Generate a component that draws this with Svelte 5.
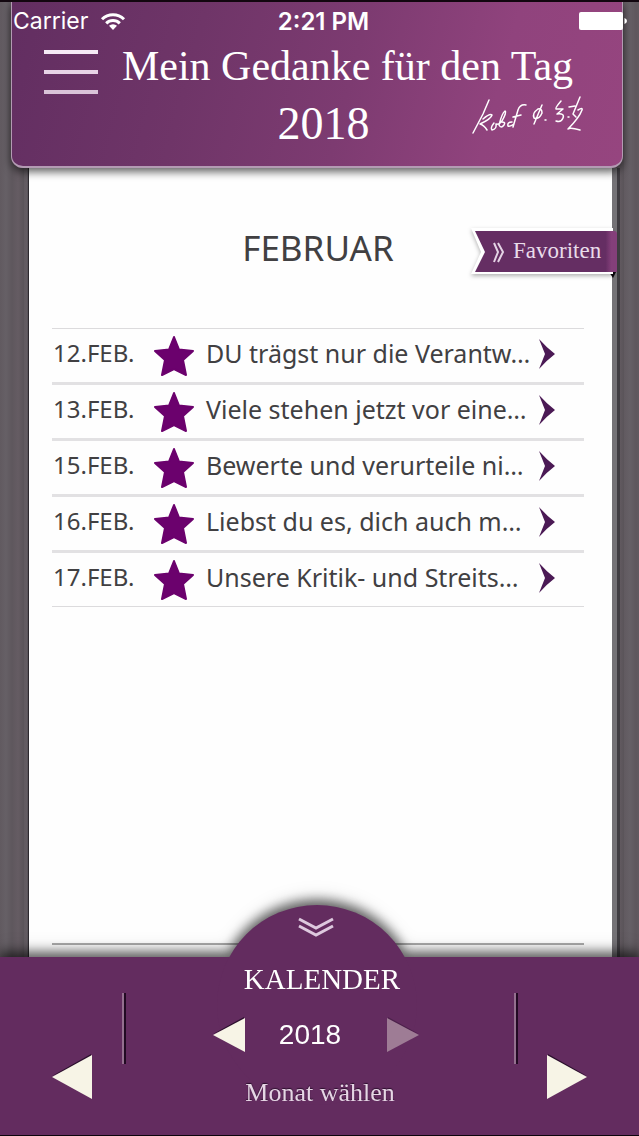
<script lang="ts">
  type Thought = { date: string; text: string };

  const thoughts: Thought[] = [
    { date: "12.FEB.", text: "DU trägst nur die Verantw…" },
    { date: "13.FEB.", text: "Viele stehen jetzt vor eine…" },
    { date: "15.FEB.", text: "Bewerte und verurteile ni…" },
    { date: "16.FEB.", text: "Liebst du es, dich auch m…" },
    { date: "17.FEB.", text: "Unsere Kritik- und Streits…" },
  ];

  const lastYear = 2018;
  let year = $state(2018);
</script>

<div class="screen">
  <header>
    <div class="status">
      <span class="carrier">
        Carrier
        <svg width="26" height="20" viewBox="0 0 26 20" aria-hidden="true">
          <g fill="none" stroke="#fff" stroke-width="3">
            <path d="M2 8.2a15.6 15.6 0 0 1 22 0" />
            <path d="M6.2 12.4a9.6 9.6 0 0 1 13.6 0" />
          </g>
          <path d="M13 19l-4-4.2a5.8 5.8 0 0 1 8 0z" fill="#fff" />
        </svg>
      </span>
      <span class="clock">2:21 PM</span>
      <svg class="battery" width="50" height="20" viewBox="0 0 50 20" role="img" aria-label="Battery full">
        <rect x="1" y="1" width="44" height="18" rx="2" fill="#fff" />
        <path d="M46.500 7q2.500 1 2.500 3t-2.500 3z" fill="#fff" />
      </svg>
    </div>

    <div class="bar">
      <button type="button" class="menu" aria-label="Menü">
        <span></span>
        <span></span>
        <span></span>
      </button>
      <h1>Mein Gedanke für den Tag <span>2018</span></h1>
      <svg class="signature" width="114" height="42" viewBox="0 0 114 42" aria-hidden="true">
        <g fill="none" stroke="#fff" stroke-width="1.500" stroke-linecap="round" stroke-linejoin="round">
          <path d="M18 5L12 19L2 38M12 24Q19 18 21 20Q20 24 9 29Q13 30 16 35" />
          <path d="M23 28Q19 33 21 35Q26 34 25 29Q28 30 31 26Q36 17 34 16Q31 18 28 30Q30 34 33 30Q35 27 31 27" />
          <path d="M41 27Q36 27 37 31Q39 32 43 29M55 10Q49 9 47 15L42 32M42 22L50 20" />
          <path d="M71 10L63 29M67 14Q61 18 63 23Q68 25 71 18Q71 13 67 14M74 25h1" />
          <path d="M90 6Q84 13 85 14L92 14L86 19Q94 18 92 23Q90 28 85 26M97 22h1" />
          <path d="M109 2L102 19L105 22M98 12L104 11M107 15Q112 12 111 15Q108 23 97 34Q99 32 109 35" />
        </g>
      </svg>
    </div>
  </header>

  <main>
    <h2>FEBRUAR</h2>
    <a class="ribbon" href="#favoriten">
      <svg viewBox="0 0 146 54" width="146" height="54" aria-hidden="true">
        <defs>
          <linearGradient id="fold">
            <stop offset="0.920" stop-color="#652e63" />
            <stop offset="0.960" stop-color="#843f7a" />
          </linearGradient>
        </defs>
        <path d="M138 46h7l-3 6z" fill="#08030a" />
        <path class="edge" d="M0 2h142v46H0l10-22z" fill="#fff" />
        <path d="M4 5h139q3 0 3 3v38H4l10-20z" fill="url(#fold)" />
        <path d="M23 17l4 9-4 10M27 17l5 9-5 10" fill="none" stroke="#e4d3e5" stroke-width="2" />
      </svg>
      <span>Favoriten</span>
    </a>

    <ul>
      {#each thoughts as thought}
        <li>
          <a href="#{thought.date}">
            <span class="date">{thought.date}</span>
            <svg class="star" width="42" height="42" viewBox="0 0 42 42" aria-hidden="true">
              <path
                d="M21 2L26 14.500L40 16L30 25L33 40L21 34L9 40L12 25L2 16L16 14.500Z"
                fill="#6b016d"
                stroke="#6b016d"
                stroke-width="2"
                stroke-linejoin="round"
              />
            </svg>
            <span class="text">{thought.text}</span>
            <svg class="go" width="16" height="30" viewBox="0 0 16 30" aria-hidden="true">
              <path d="M0 0Q8 9 16 15Q8 21 0 30L6 15Z" fill="#4b1a55" />
            </svg>
          </a>
        </li>
      {/each}
    </ul>
    <hr />
  </main>

  <footer>
    <div class="dome"></div>
    <div class="side">
      <button type="button" aria-label="Vorheriger Monat">
        <svg width="40" height="46" viewBox="0 0 40 46">
          <path d="M0 22L39 0v6z" fill="#2a0f2c" />
          <path d="M0 23L40 1v44z" fill="#f7f4e6" />
        </svg>
      </button>
    </div>
    <div class="divider"></div>
    <div class="center">
      <svg class="down" width="36" height="20" viewBox="0 0 36 20" aria-hidden="true">
        <path d="M1 2L18 11L35 2M1 9L18 18L35 9" fill="none" stroke="#ddc9de" stroke-width="3" />
      </svg>
      <h3>KALENDER</h3>
      <div class="year">
        <button type="button" aria-label="Vorheriges Jahr" onclick={() => (year -= 1)}>
          <svg width="32" height="36" viewBox="0 0 32 36">
            <path d="M0 17L31 0v5z" fill="#2a0f2c" />
            <path d="M0 18L32 1v34z" fill="#f7f4e6" />
          </svg>
        </button>
        <span>{year}</span>
        <button type="button" aria-label="Nächstes Jahr" disabled={year >= lastYear} onclick={() => (year += 1)}>
          <svg width="32" height="36" viewBox="0 0 32 36">
            <path d="M32 17L1 0v5z" fill="#2a0f2c" />
            <path d="M32 18L0 1v34z" fill="#f7f4e6" />
          </svg>
        </button>
      </div>
      <button type="button" class="month">Monat wählen</button>
    </div>
    <div class="divider"></div>
    <div class="side">
      <button type="button" aria-label="Nächster Monat">
        <svg width="40" height="46" viewBox="0 0 40 46">
          <path d="M40 22L1 0v6z" fill="#2a0f2c" />
          <path d="M40 23L0 1v44z" fill="#f7f4e6" />
        </svg>
      </button>
    </div>
  </footer>
</div>

<style>
  :global(body) {
    margin: 0;
  }

  .screen {
    box-sizing: border-box;
    min-height: 100vh;
    display: flex;
    flex-direction: column;
    overflow: hidden;
    border-top: 2px solid #12060f;
    border-bottom: 1px solid #0d040d;
    background: repeating-linear-gradient(90deg, #615a60 0, #666066 6px, #5e575d 12px, #655c63 18px, #5a5459 24px);
    font-family: "Noto Sans", "Open Sans", sans-serif;
    color: #414042;
  }

  button {
    padding: 0;
    border: 0;
    background: none;
    color: inherit;
    font: inherit;
    cursor: pointer;
  }

  svg {
    display: block;
  }

  header {
    position: relative;
    z-index: 2;
    box-sizing: border-box;
    min-height: 166px;
    margin: 0 16px 0 11px;
    border: solid #b39bb3;
    border-width: 0 1px 2px;
    border-radius: 0 0 12px 12px;
    background: linear-gradient(105deg, #622e61 0%, #6f3568 30%, #7d3b71 55%, #90437d 78%, #96457f 100%);
    box-shadow: 0 4px 9px rgba(0, 0, 0, 0.6);
    color: #fff;
  }

  .status {
    display: grid;
    grid-template-columns: 1fr auto 1fr;
    align-items: center;
    height: 38px;
    margin-right: -6px;
    padding-left: 1px;
    font-family: Inter, Roboto, sans-serif;
    font-size: 23px;
  }

  .carrier {
    display: flex;
    align-items: center;
    gap: 12px;
  }

  .clock {
    padding-left: 6px;
    font-size: 24px;
    font-weight: 600;
  }

  .battery {
    justify-self: end;
  }

  .bar {
    display: flex;
    align-items: flex-start;
    padding: 0 37px 0 32px;
  }

  .menu {
    flex: none;
    display: flex;
    flex-direction: column;
    gap: 16px;
    width: 54px;
    margin-top: 10px;
  }

  .menu span {
    height: 4px;
    background: #f6eaf6;
  }

  .menu span:nth-child(2) {
    background: #e7d3e6;
  }

  .menu span:nth-child(3) {
    background: #d9c3d8;
  }

  h1 {
    flex: 1;
    margin: -3px -86px 0 0;
    padding-left: 12px;
    font-family: "Liberation Serif", serif;
    font-size: 42px;
    font-weight: 400;
    line-height: 58px;
    text-align: center;
    white-space: nowrap;
  }

  h1 span {
    display: block;
    padding-right: 48px;
    font-size: 46px;
  }

  .signature {
    flex: none;
    margin: 55px 0 0 -28px;
  }

  main {
    position: relative;
    flex: 1;
    display: flex;
    flex-direction: column;
    margin: 0 27px 0 29px;
    padding: 50px 28px 12px 23px;
    background: #fefefe;
    box-shadow:
      -1px 0 1px #2d2a2f,
      5px 0 0 #747276,
      8px 0 0 #3f3c41;
  }

  h2 {
    margin: 0;
    font-size: 35px;
    font-weight: 400;
    line-height: 60px;
    text-align: center;
  }

  .ribbon {
    position: absolute;
    top: 58px;
    right: -5px;
    color: #e9dcea;
    font-family: "Liberation Serif", serif;
    font-size: 23px;
    text-decoration: none;
  }

  .ribbon svg {
    overflow: visible;
  }

  .edge {
    filter: drop-shadow(0 2px 2px rgba(0, 0, 0, 0.3));
  }

  .ribbon span {
    position: absolute;
    left: 42px;
    top: 11px;
    line-height: 28px;
  }

  ul {
    margin: 50px 0 0;
    padding: 0;
    border: solid #dcdbdd;
    border-width: 1px 0;
    list-style: none;
  }

  li + li {
    border-top: 3px solid #e2e1e3;
  }

  li a {
    display: flex;
    align-items: center;
    height: 53px;
    color: inherit;
    font-size: 25px;
    line-height: 46px;
    text-decoration: none;
    white-space: nowrap;
  }

  .date {
    width: 100px;
    padding: 0 0 5px 1px;
    font-size: 24px;
  }

  .text {
    flex: 1;
    margin-left: 11px;
    padding-bottom: 5px;
  }

  .go {
    margin: 0 29px 4px 0;
  }

  hr {
    width: 100%;
    margin: auto 0 0;
    border: 0;
    border-top: 2px solid #aaa;
  }

  footer {
    position: relative;
    z-index: 1;
    display: flex;
    align-items: flex-start;
    min-height: 178px;
    background: #632c5f;
    color: #fff;
    filter: drop-shadow(0 -4px 6px rgba(0, 0, 0, 0.45)) drop-shadow(0 -4px 6px rgba(0, 0, 0, 0.35));
  }

  .dome {
    position: absolute;
    top: -52px;
    left: 50%;
    width: 200px;
    height: 200px;
    margin-left: -103px;
    border-radius: 50%;
    background: #632c5f;
  }

  .side {
    flex: none;
    width: 70px;
    padding: 97px 0 0 52px;
  }

  .divider + .side {
    width: 92px;
    padding-left: 29px;
  }

  .divider {
    flex: none;
    width: 2px;
    height: 71px;
    margin-top: 36px;
    border-left: 2px solid #94708f;
    background: #220a23;
  }

  .center {
    position: relative;
    flex: 1;
    display: flex;
    flex-direction: column;
    align-items: center;
    margin-top: -40px;
    padding-right: 8px;
  }

  h3 {
    margin: 22px 0 0 12px;
    font-family: "Liberation Serif", serif;
    font-size: 29px;
    font-weight: 400;
    line-height: 40px;
  }

  .year {
    display: flex;
    align-items: center;
    justify-content: space-between;
    width: 206px;
    margin-top: 18px;
    font-family: "Liberation Sans", Arial, sans-serif;
    font-size: 28px;
    line-height: 36px;
  }

  .year span {
    padding-right: 12px;
  }

  .year button:disabled {
    opacity: 0.4;
    cursor: default;
  }

  .month {
    margin: 24px 0 0 8px;
    color: #e6d6e5;
    font-family: "Liberation Serif", serif;
    font-size: 26px;
    line-height: 32px;
    text-shadow: 0 -1px 1px #2a0f2c;
  }
</style>
